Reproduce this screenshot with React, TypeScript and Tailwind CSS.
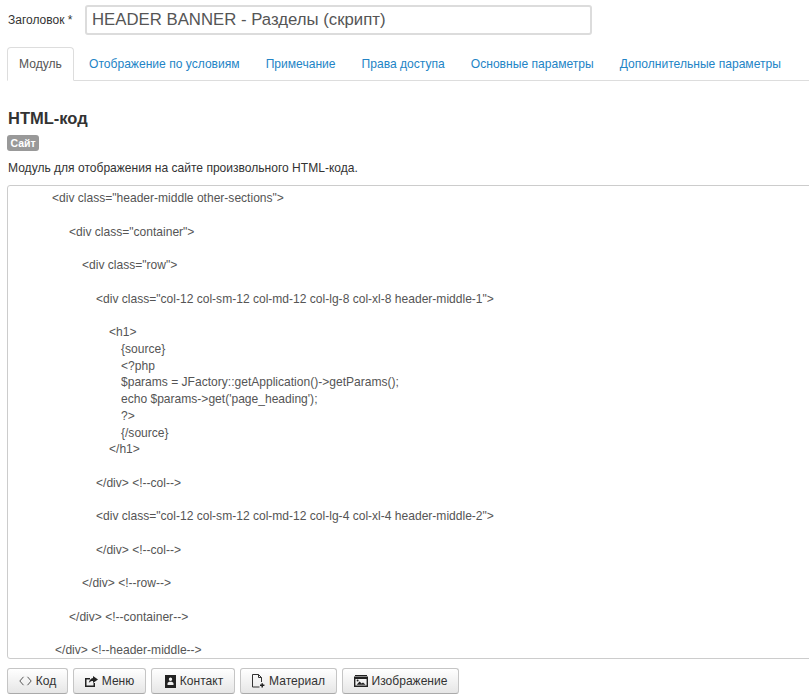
import React from 'react';

const font = "font-['Liberation_Sans',Arial,sans-serif]";

const lines = [
  { text: '<div class="header-middle other-sections">', indent: 'pl-[44px]' },
  { text: '', indent: '' },
  { text: '<div class="container">', indent: 'pl-[61px]' },
  { text: '', indent: '' },
  { text: '<div class="row">', indent: 'pl-[74px]' },
  { text: '', indent: '' },
  { text: '<div class="col-12 col-sm-12 col-md-12 col-lg-8 col-xl-8 header-middle-1">', indent: 'pl-[88px]' },
  { text: '', indent: '' },
  { text: '<h1>', indent: 'pl-[101px]' },
  { text: '{source}', indent: 'pl-[113px]' },
  { text: '<?php', indent: 'pl-[113px]' },
  { text: '$params = JFactory::getApplication()->getParams();', indent: 'pl-[113px]' },
  { text: "echo $params->get('page_heading');", indent: 'pl-[113px]' },
  { text: '?>', indent: 'pl-[113px]' },
  { text: '{/source}', indent: 'pl-[113px]' },
  { text: '</h1>', indent: 'pl-[101px]' },
  { text: '', indent: '' },
  { text: '</div> <!--col-->', indent: 'pl-[88px]' },
  { text: '', indent: '' },
  { text: '<div class="col-12 col-sm-12 col-md-12 col-lg-4 col-xl-4 header-middle-2">', indent: 'pl-[88px]' },
  { text: '', indent: '' },
  { text: '</div> <!--col-->', indent: 'pl-[88px]' },
  { text: '', indent: '' },
  { text: '</div> <!--row-->', indent: 'pl-[74px]' },
  { text: '', indent: '' },
  { text: '</div> <!--container-->', indent: 'pl-[61px]' },
  { text: '', indent: '' },
  { text: '</div> <!--header-middle-->', indent: 'pl-[47px]' },
];

const tabs = ['Отображение по условиям', 'Примечание', 'Права доступа', 'Основные параметры', 'Дополнительные параметры'];

const CodeIcon = () => (
  <svg width="13" height="10" viewBox="0 0 13 10" fill="none" stroke="#555" strokeWidth="1">
    <path d="M4.5 .8.8 5l3.7 4.2M8.5 .8 12.2 5 8.5 9.2" />
  </svg>
);

const ShareIcon = () => (
  <svg width="13" height="11" viewBox="0 0 13 11" fill="#222">
    <path d="M0 2h5v1.5H1.5v6h7V7H10v4H0z" />
    <path d="M8 0 13 3.5 8 7V5C6.3 5 5 5.6 3.8 7 4 4.6 5.8 2.4 8 2.1z" />
  </svg>
);

const ContactIcon = () => (
  <svg width="11" height="13" viewBox="0 0 11 13" fill="#222">
    <path fillRule="evenodd" d="M0 0h11v13H0zM5.5 2.6a1.7 1.7 0 1 0 0 3.4 1.7 1.7 0 0 0 0-3.4zM2.5 10h6V8.4C8.5 7.3 7.2 6.8 5.5 6.8s-3 .5-3 1.6z" />
  </svg>
);

const ArticleIcon = () => (
  <svg width="13" height="14" viewBox="0 0 13 14" fill="none" stroke="#333" strokeWidth="1">
    <path d="M7.5 13H.5V.5H6.5L9.5 3.5V8M6.5 .5v3h3" />
    <path d="M10.2 9.2v4.3M8 11.3h4.4" strokeWidth="1.5" stroke="#222" />
  </svg>
);

const ImageIcon = () => (
  <svg width="14" height="12" viewBox="0 0 14 12" fill="#222">
    <path d="M1 0h12v1H1z" />
    <path fillRule="evenodd" d="M0 1.6h14V12H0zM1.4 4v6.6h11.2V4zM2.6 9.8 5.6 6.6l2 1.8 1.4-1 2.6 2.4zM3.6 4.6a1 1 0 1 0 0 2 1 1 0 0 0 0-2z" />
  </svg>
);

const buttons = [
  { label: 'Код', icon: <CodeIcon />, width: 'w-[61px]' },
  { label: 'Меню', icon: <ShareIcon />, width: 'w-[73px]' },
  { label: 'Контакт', icon: <ContactIcon />, width: 'w-[84px] pl-[2px]' },
  { label: 'Материал', icon: <ArticleIcon />, width: 'w-[97px]' },
  { label: 'Изображение', icon: <ImageIcon />, width: 'w-[117px]' },
];

const App: React.FC = () => {
  return (
    <div className={`h-[700px] w-[809px] overflow-hidden bg-white text-[#333] text-[12.06px] ${font}`}>
      {/* Title */}
      <div className="flex items-center pl-[8px] pt-[5px] h-[35px]">
        <label className="w-[77px] text-[12px] text-[#333]">Заголовок *</label>
        <div className="flex items-center w-[507px] h-[30px] border-2 border-[#dcdcdc] rounded-[3px] pl-[5px] text-[16.75px] text-[#555]">
          HEADER BANNER - Разделы (скрипт)
        </div>
      </div>

      {/* Tabs */}
      <div className="flex mt-[12px] ml-[7px] h-[34px] border-b border-[#ddd] text-[12.08px]">
        <div className="flex items-center justify-center w-[67px] h-[34px] pt-[1px] bg-white border border-[#ddd] border-b-white rounded-t-[4px] text-[#555]">
          Модуль
        </div>
        <div className="flex items-center gap-[26px] pl-[15px] h-[33px] pt-[1px] text-[#2384c6]">
          {tabs.map((t) => (
            <span key={t}>{t}</span>
          ))}
        </div>
      </div>

      {/* Module info */}
      <h2 className="mt-[27px] ml-[8px] text-[16.5px] leading-[20px] font-bold text-[#333]">HTML-код</h2>
      <span className="block mt-[7px] ml-[7px] w-[32px] h-[16px] rounded-[3px] bg-[#999] text-center text-[10.5px] leading-[16px] font-bold text-white">
        Сайт
      </span>
      <p className="mt-[8px] ml-[8px] leading-[18px] text-[#333]">
        Модуль для отображения на сайте произвольного HTML-кода.
      </p>

      {/* Editor */}
      <div className="mt-[8px] ml-[7px] w-[830px] h-[474px] overflow-hidden border border-[#ccc] rounded-l-[3px] pt-[4px] text-[#555]">
        {lines.map((l, i) => (
          <div key={i} className={`h-[16.75px] leading-[16.75px] whitespace-pre ${l.indent}`}>
            {l.text}
          </div>
        ))}
      </div>

      {/* Editor buttons */}
      <div className="flex gap-[5px] mt-[9px] ml-[7px]">
        {buttons.map((b) => (
          <div
            key={b.label}
            className={`flex items-center justify-center gap-[4px] h-[26px] ${b.width} border border-[#c5c5c5] border-b-[#aaa] rounded-[3px] bg-gradient-to-b from-white to-[#e6e6e6] text-[#333]`}
          >
            {b.icon}
            <span>{b.label}</span>
          </div>
        ))}
      </div>
    </div>
  );
};

export default App;
